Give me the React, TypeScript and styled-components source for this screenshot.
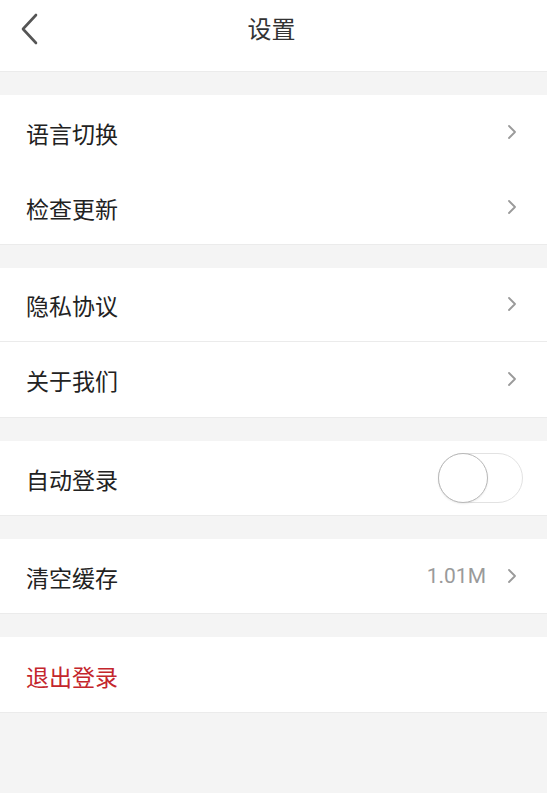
import React from "react";
import styled, { createGlobalStyle } from "styled-components";

const Global = createGlobalStyle`
  html, body { margin: 0; padding: 0; background: #f4f4f4; }
  body { font-family: "Noto Sans CJK SC", "Noto Sans", sans-serif; }
`;

const Page = styled.div`
  width: 547px;
  min-height: 793px;
  background: #f4f4f4;
  display: flex;
  flex-direction: column;
`;

const Header = styled.header`
  height: 71px;
  background: #fff;
  border-bottom: 1px solid #ebebeb;
  display: flex;
  align-items: flex-start;
  justify-content: center;
  position: relative;
`;

const BackButton = styled.button`
  position: absolute;
  left: 14px;
  top: 10px;
  width: 32px;
  height: 38px;
  border: 0;
  background: none;
  padding: 0;
  display: flex;
  align-items: center;
  justify-content: center;
`;

const Title = styled.h1`
  margin: 0 4px 0 0;
  padding-top: 16px;
  font-size: 24px;
  line-height: 24px;
  font-weight: 400;
  color: #333;
`;

const Group = styled.section`
  margin-top: 23px;
  background: #fff;
  border-bottom: 1px solid #ebebeb;
  display: flex;
  flex-direction: column;
`;

const Row = styled.div<{ $divider?: boolean }>`
  height: 74.4px;
  box-sizing: border-box;
  border-bottom: ${(p) => (p.$divider ? "1px solid #ebebeb" : "none")};
  display: flex;
  align-items: center;
  padding: 0 30px 0 26px;
`;

const Label = styled.span<{ $danger?: boolean }>`
  flex: 1;
  font-size: 23px;
  color: ${(p) => (p.$danger ? "#c4262c" : "#222")};
  padding-top: 2px;
`;

const Value = styled.span`
  font-family: Roboto, "Noto Sans", sans-serif;
  font-size: 21px;
  color: #9a9a9a;
  margin-right: 21px;
`;

const Toggle = styled.div`
  width: 85px;
  height: 50px;
  border-radius: 25px;
  border: 1px solid #e2e2e2;
  box-sizing: border-box;
  background: #fff;
  position: relative;
  margin-right: -6px;
`;

const Knob = styled.div`
  position: absolute;
  left: -1px;
  top: -1px;
  width: 50px;
  height: 50px;
  border-radius: 50%;
  border: 1.5px solid #b8b8b8;
  box-sizing: border-box;
  background: #fff;
  box-shadow: 0 1px 2px rgba(0, 0, 0, 0.08);
`;

const Chevron = () => (
  <svg width="10" height="16" viewBox="0 0 10 16" fill="none">
    <path d="M2 2l6 6-6 6" stroke="#9a9a9a" strokeWidth="1.8" strokeLinecap="round" strokeLinejoin="round" />
  </svg>
);

export default function App() {
  return (
    <Page>
      <Global />
      <Header>
        <BackButton aria-label="返回">
          <svg width="20" height="32" viewBox="0 0 20 32" fill="none">
            <path d="M16 2L3 16l13 14" stroke="#555" strokeWidth="2.6" strokeLinecap="round" strokeLinejoin="round" />
          </svg>
        </BackButton>
        <Title>设置</Title>
      </Header>
      <Group>
        <Row>
          <Label>语言切换</Label>
          <Chevron />
        </Row>
        <Row>
          <Label>检查更新</Label>
          <Chevron />
        </Row>
      </Group>
      <Group>
        <Row $divider>
          <Label>隐私协议</Label>
          <Chevron />
        </Row>
        <Row>
          <Label>关于我们</Label>
          <Chevron />
        </Row>
      </Group>
      <Group>
        <Row>
          <Label>自动登录</Label>
          <Toggle>
            <Knob />
          </Toggle>
        </Row>
      </Group>
      <Group>
        <Row>
          <Label>清空缓存</Label>
          <Value>1.01M</Value>
          <Chevron />
        </Row>
      </Group>
      <Group>
        <Row>
          <Label $danger>退出登录</Label>
        </Row>
      </Group>
    </Page>
  );
}
